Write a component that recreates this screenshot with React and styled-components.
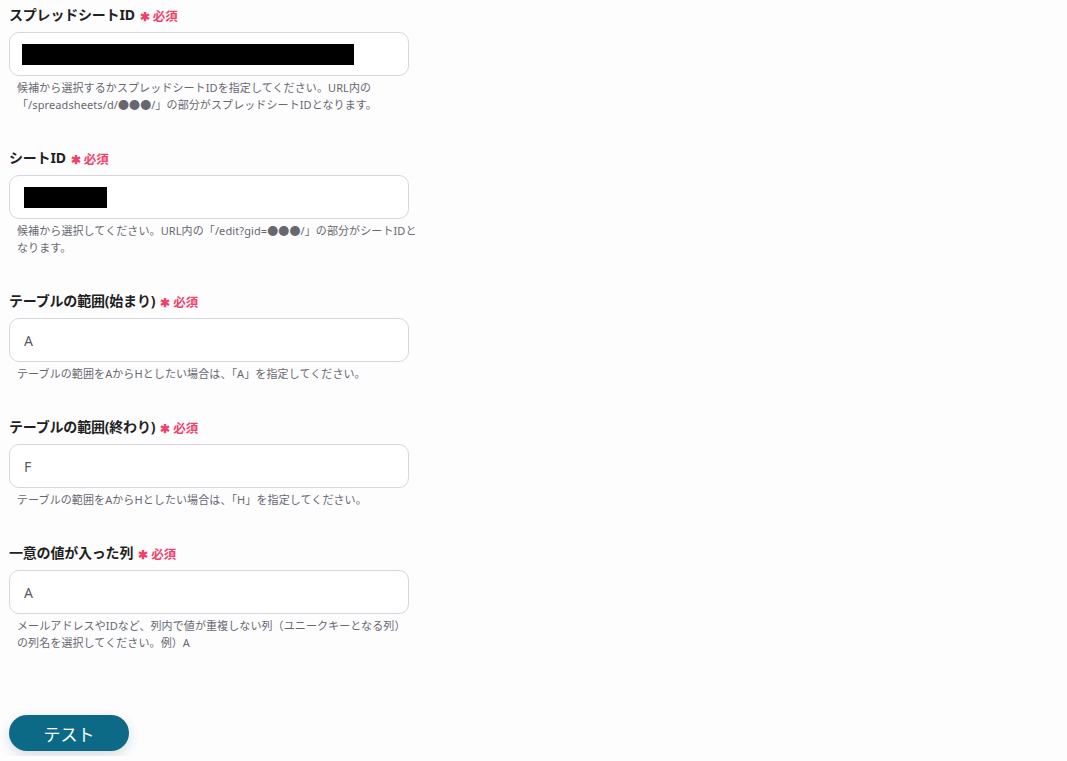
import React from "react";
import styled, { createGlobalStyle } from "styled-components";

const GlobalStyle = createGlobalStyle`
  html, body {
    margin: 0;
    padding: 0;
    background: #fdfdfe;
  }
  body {
    font-family: "Noto Sans", "Noto Sans CJK JP", sans-serif;
    color: #222;
  }
`;

const fields = [
  {
    label: "スプレッドシートID",
    masked: 332,
    maskLeft: 12,
    help: ["候補から選択するかスプレッドシートIDを指定してください。URL内の", "「/spreadsheets/d/●●●/」の部分がスプレッドシートIDとなります。"],
  },
  {
    label: "シートID",
    masked: 83,
    maskLeft: 14,
    help: ["候補から選択してください。URL内の「/edit?gid=●●●/」の部分がシートIDと", "なります。"],
  },
  {
    label: "テーブルの範囲(始まり)",
    value: "A",
    help: ["テーブルの範囲をAからHとしたい場合は、「A」を指定してください。"],
  },
  {
    label: "テーブルの範囲(終わり)",
    value: "F",
    help: ["テーブルの範囲をAからHとしたい場合は、「H」を指定してください。"],
  },
  {
    label: "一意の値が入った列",
    value: "A",
    help: ["メールアドレスやIDなど、列内で値が重複しない列（ユニークキーとなる列）", "の列名を選択してください。例）A"],
  },
];

const App = () => {
  return (
    <Page>
      <GlobalStyle />
      <Form>
        {fields.map((f) => (
          <Field key={f.label}>
            <Label>
              {f.label}
              <Required>
                <Star>✱</Star>必須
              </Required>
            </Label>
            <InputBox>
              {f.masked ? (
                <Mask $width={f.masked} $left={f.maskLeft} />
              ) : (
                <Value>{f.value}</Value>
              )}
            </InputBox>
            <Help>
              {f.help.map((line) => (
                <div key={line}>{line}</div>
              ))}
            </Help>
          </Field>
        ))}
      </Form>
      <TestButton>テスト</TestButton>
    </Page>
  );
};

const Page = styled.div`
  padding: 4px 0 0 9px;
  min-height: 756px;
  box-sizing: border-box;
`;

const Form = styled.div`
  display: flex;
  flex-direction: column;
  gap: 34px;
  width: 400px;
`;

const Field = styled.div`
  display: flex;
  flex-direction: column;
`;

const Label = styled.div`
  display: flex;
  align-items: center;
  height: 20px;
  font-size: 14px;
  font-weight: 700;
  color: #1f1f24;
  margin-bottom: 8px;
  letter-spacing: -0.2px;
`;

const Required = styled.span`
  display: inline-flex;
  align-items: center;
  margin-left: 5px;
  padding-top: 3px;
  color: #f0416a;
  font-size: 12.5px;
  font-weight: 600;
  letter-spacing: 0;
`;

const Star = styled.span`
  font-size: 12px;
  margin-right: 3px;
  position: relative;
  top: 1px;
`;

const InputBox = styled.div`
  box-sizing: border-box;
  height: 44px;
  border: 1px solid #d6d6de;
  border-radius: 10px;
  background: #fff;
  display: flex;
  align-items: center;
  padding-left: 14px;
`;

const Mask = styled.div`
  width: ${({ $width }) => $width}px;
  height: 21px;
  margin-left: ${({ $left }) => $left - 14}px;
  background: #000;
`;

const Value = styled.span`
  font-size: 14px;
  color: #555a66;
`;

const Help = styled.div`
  margin-top: 3px;
  padding-left: 8px;
  font-size: 11px;
  line-height: 17px;
  color: #676770;
  white-space: nowrap;
  letter-spacing: 0.1px;
`;

const TestButton = styled.button`
  margin-top: 64px;
  width: 120px;
  height: 36px;
  border: none;
  border-radius: 18px;
  background: #0c6a87;
  color: #fff;
  font-family: "Noto Sans CJK JP", sans-serif;
  font-size: 17px;
  box-shadow: 0 4px 12px rgba(40, 60, 90, 0.18);
  display: block;
`;

export default App;
